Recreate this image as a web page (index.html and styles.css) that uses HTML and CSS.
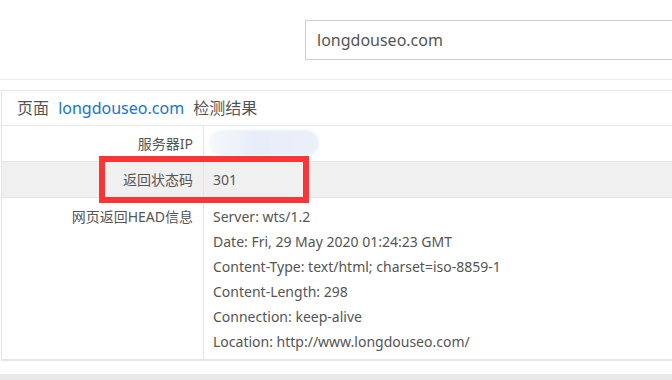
FILE: index.html
```html
<!DOCTYPE html>
<html lang="zh-CN">
<head>
<meta charset="UTF-8">
<title>检测结果</title>
<link rel="stylesheet" href="styles.css">
</head>
<body>
<div class="search">
    <div class="search-box">longdouseo.com</div>
</div>

<div class="panel">
    <div class="panel-title">页面 <a href="#">longdouseo.com</a> 检测结果</div>
    <div class="row">
        <div class="label">服务器IP</div>
        <div class="value"><span class="masked"></span></div>
    </div>
    <div class="row row-gray">
        <div class="label">返回状态码</div>
        <div class="value">301</div>
    </div>
    <div class="row row-head">
        <div class="label">网页返回HEAD信息</div>
        <div class="value">
            Server: wts/1.2<br>
            Date: Fri, 29 May 2020 01:24:23 GMT<br>
            Content-Type: text/html; charset=iso-8859-1<br>
            Content-Length: 298<br>
            Connection: keep-alive<br>
            Location: http://www.longdouseo.com/
        </div>
    </div>
    <!-- 标注框 -->
    <div class="mark"></div>
</div>

<div class="footer-band"></div>
</body>
</html>
```

FILE: styles.css
```css
body {
margin: 0;
background: #fff;
font-family: "Microsoft YaHei", "Noto Sans", "Noto Sans CJK SC", sans-serif;
color: #555;
}
.search {
height: 80px;
border-bottom: 1px solid #eee;
padding: 20px 0 0 305px;
box-sizing: border-box;
}
.search-box {
height: 40px;
box-sizing: border-box;
border: 1px solid #c6cde0;
border-right: none;
padding-left: 11px;
line-height: 38px;
font-size: 16px;
color: #555;
}
.panel {
position: relative;
margin: 10px 0 0 1px;
border: 1px solid #e6e6e6;
border-right: none;
}
.panel-title {
height: 34px;
line-height: 34px;
padding-left: 15px;
font-size: 16px;
border-bottom: 1px solid #e6e6e6;
}
.panel-title a {
color: #1874cd;
text-decoration: none;
margin: 0 5px;
}
.row {
display: flex;
border-bottom: 1px solid #e6e6e6;
font-size: 14px;
}
.row:last-of-type {
border-bottom: none;
}
.row-gray {
background: #f0f0f0;
}
.label {
width: 191px;
padding-right: 10px;
text-align: right;
border-right: 1px solid #e6e6e6;
line-height: 35px;
}
.value {
padding-left: 9px;
line-height: 35px;
}
.row-head .label,
.row-head .value {
line-height: 25px;
padding-top: 6px;
padding-bottom: 5px;
}
.masked {
display: inline-block;
width: 110px;
height: 26px;
margin: 4px 0 0 -4px;
vertical-align: top;
border-radius: 13px;
background: linear-gradient(90deg, #f5f8fc, #e8eef9 40%, #ebf0fa);
filter: blur(1px);
}
.mark {
position: absolute;
left: 97px;
top: 65px;
width: 198px;
height: 35px;
border: 6px solid #fb3535;
}
.footer-band {
margin-top: 13px;
height: 20px;
background: #e9e9e9;
}
```
